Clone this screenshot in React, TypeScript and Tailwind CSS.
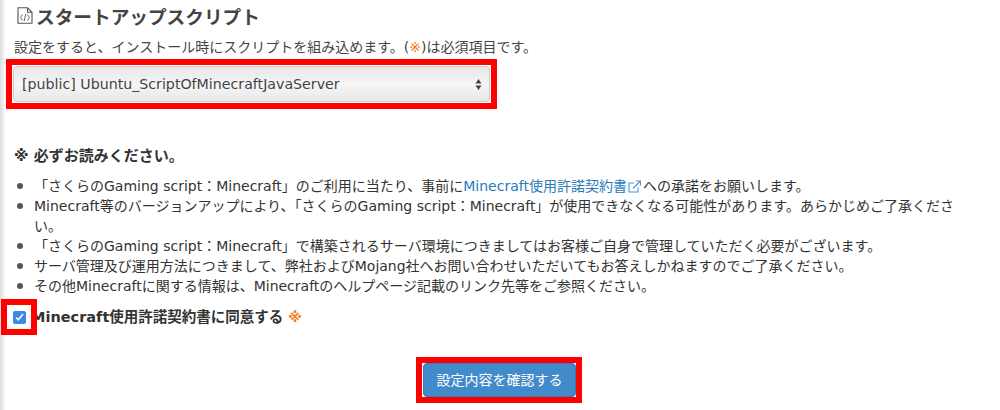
const notes = [
  <>「さくらのGaming script：Minecraft」のご利用に当たり、事前に<a className="text-[#2a7ab8]">Minecraft使用許諾契約書<ExternalIcon /></a>への承諾をお願いします。</>,
  <>Minecraft等のバージョンアップにより、「さくらのGaming script：Minecraft」が使用できなくなる可能性があります。あらかじめご了承ください。</>,
  <>「さくらのGaming script：Minecraft」で構築されるサーバ環境につきましてはお客様ご自身で管理していただく必要がございます。</>,
  <>サーバ管理及び運用方法につきまして、弊社およびMojang社へお問い合わせいただいてもお答えしかねますのでご了承ください。</>,
  <>その他Minecraftに関する情報は、Minecraftのヘルプページ記載のリンク先等をご参照ください。</>,
];

function ExternalIcon() {
  return (
    <svg className="inline-block ml-[1px] mr-[2px] mb-[2px]" width="13" height="13" viewBox="0 0 13 13" fill="none" stroke="#4f94cc" strokeWidth="1.1">
      <path d="M10 7.5v4.5H1V3h5" />
      <path d="M5 8.5 12 1.5M8 1h4.5v4.5" />
    </svg>
  );
}

function ScriptIcon() {
  return (
    <svg width="16" height="17" viewBox="0 0 16 17" fill="none" stroke="#555" strokeWidth="1.1">
      <path d="M1 .8h9.5l4.5 4.5v10.9H1z" />
      <path d="M10.5.8v4.5H15" />
      <path d="M5.5 7.5 3.6 10.5l1.9 3M10.5 7.5l1.9 3-1.9 3M8.8 7l-1.6 7" strokeWidth="0.9" />
    </svg>
  );
}

export default function App() {
  return (
    <div className="w-[1000px] h-[410px] overflow-hidden bg-white text-[#333] font-['DejaVu_Sans','Noto_Sans_CJK_JP',sans-serif] text-[14px] leading-[20px]">
      <div className="h-full bg-gradient-to-r from-[#dcdcdc] to-white to-[6px] pl-[14px] pr-[16px]">
        <h2 className="flex items-center gap-[3px] pl-[3px] pt-[3px] h-[28px] text-[18.67px] font-bold text-[#444] font-['Noto_Sans_CJK_JP',sans-serif]">
          <ScriptIcon />
          スタートアップスクリプト
        </h2>
        <p className="mt-[9px] text-[#444]">
          設定をすると、インストール時にスクリプトを組み込めます。(<span className="text-[#f08020]">※</span>)は必須項目です。
        </p>
        <div className="mt-[2px] -ml-[8px] w-[491px] h-[50px] border-[6px] border-[#f00] p-[1px]">
          <div className="h-full rounded-[4px] border border-[#ccc] bg-gradient-to-b from-[#e6e6e6] via-[#f6f6f6] to-[#e8e8e8] flex items-center justify-between pl-[8px] pr-[7px] text-[#444]">
            <span className="text-[14.2px]">[public] Ubuntu_ScriptOfMinecraftJavaServer</span>
            <svg width="7" height="13" viewBox="0 0 7 13" fill="#444">
              <path d="M3.5 1 6.5 5.5h-6zM3.5 12 .5 7.5h6z" />
            </svg>
          </div>
        </div>
        <p className="mt-[37px] font-bold text-[15px] text-[#333]">※ 必ずお読みください。</p>
        <ul className="mt-[10px] pr-[8px] text-[#333]">
          {notes.map((note, i) => (
            <li key={i} className="relative pl-[20px]">
              <span className="absolute left-[3px] top-[7px] w-[6px] h-[6px] rounded-full bg-[#555]" />
              {note}
            </li>
          ))}
        </ul>
        <div className="flex items-center mt-[3px] -ml-[13px]">
          <div className="relative z-10 w-[36px] h-[36px] shrink-0 border-[6px] border-[#f00] flex items-center justify-center">
            <span className="w-[13px] h-[13px] rounded-[2px] bg-[#3b88e8] flex items-center justify-center">
              <svg width="9" height="8" viewBox="0 0 9 8" fill="none" stroke="#fff" strokeWidth="1.6">
                <path d="M1 4.5 3.3 6.8 8 1" />
              </svg>
            </span>
          </div>
          <span className="-ml-[6px] font-bold text-[14.5px] text-[#333]">Minecraft使用許諾契約書に同意する</span>
          <span className="ml-[5px] text-[#f08020] font-bold">※</span>
        </div>
        <div className="flex justify-center mt-[22px]">
          <div className="w-[166px] h-[46px] border-[6px] border-[#f00] pl-[1px]">
            <button className="block w-full h-full rounded-[4px] bg-[#428bca] border border-[#357ebd] text-white text-[14px]">
              設定内容を確認する
            </button>
          </div>
        </div>
      </div>
    </div>
  );
}
